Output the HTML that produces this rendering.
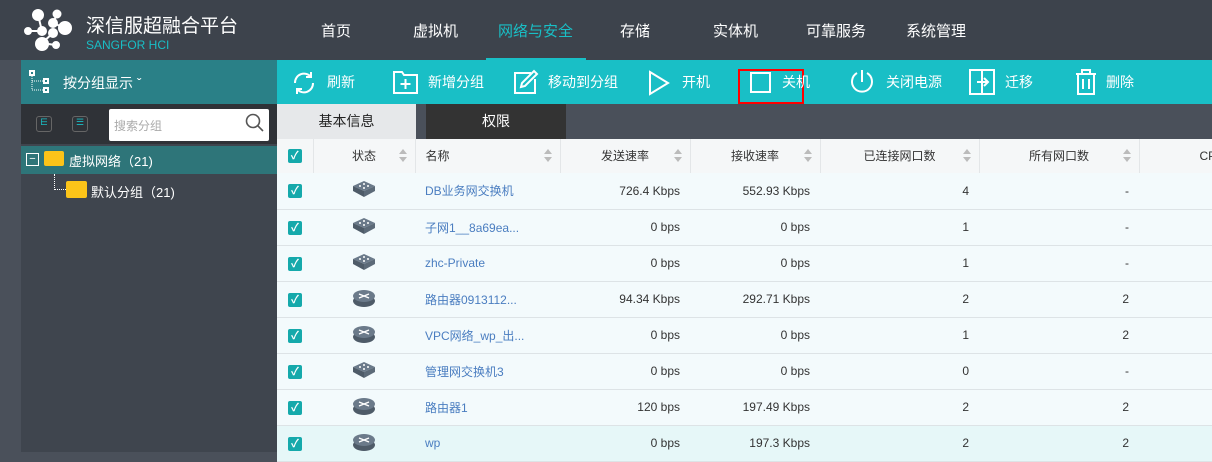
<!DOCTYPE html>
<html><head><meta charset="utf-8"><style>
*{margin:0;padding:0;box-sizing:border-box}
body{width:1212px;height:452px;overflow:hidden;background:#4a505a;font-family:"Liberation Sans","Noto Sans CJK SC",sans-serif;font-size:13px;position:relative}
.abs{position:absolute}
#hdr{left:0;top:0;width:1212px;height:60px;background:#3d434c}
.nav{position:absolute;top:20px;color:#fff;font-size:15px}
#tb{left:277px;top:60px;width:935px;height:44px;background:#19bfc6}
#tbl{left:21px;top:60px;width:256px;height:44px;background:#2a8087;color:#fff}
.ti{position:absolute;top:12px;color:#fff;font-size:14px}
#lp{left:21px;top:104px;width:256px;height:348px;background:#3f454e}
#srow{left:21px;top:104px;width:256px;height:40px;background:#2f3237}
table{position:absolute;left:277px;top:139px;border-collapse:collapse;width:960px;table-layout:fixed}
td,th{height:36px;border-bottom:1px solid #dde3e6;font-weight:normal;font-size:12px;color:#333}
th{background:#f5f7f8;height:34px;border-right:1px solid #e3e6e8;position:relative}
tr.r td{background:#f3fafc}
.cb{display:inline-block;width:14px;height:14px;background:#15a9ab;border-radius:2px;color:#fff;font-size:11px;line-height:14px;text-align:center;font-weight:bold}
.sort{position:absolute;right:8px;top:10px;width:8px;height:14px}
.sort:before{content:"";position:absolute;left:0;top:0;border:4px solid transparent;border-bottom:5px solid #bbb;border-top:0}
.sort:after{content:"";position:absolute;left:0;top:8px;border:4px solid transparent;border-top:5px solid #bbb;border-bottom:0}
.nm{color:#4a7dc0;padding-left:10px;text-align:left}
.num{text-align:right;padding-right:10px}
</style></head><body>
<div id="hdr" class="abs">
<svg class="abs" style="left:22px;top:6px" width="50" height="48" viewBox="22 6 50 48"><g fill="#fff" stroke="#fff" stroke-width="2">
<line x1="38" y1="15" x2="42" y2="31"/><line x1="28" y1="31" x2="42" y2="31"/><line x1="57" y1="14" x2="53" y2="23"/><line x1="53" y1="23" x2="65" y2="28"/><line x1="53" y1="33" x2="42" y2="43"/><line x1="42" y1="43" x2="55" y2="45"/>
<circle cx="38" cy="15" r="5"/><circle cx="57" cy="14" r="3.5"/><circle cx="65" cy="28" r="6"/><circle cx="53" cy="23" r="4"/><circle cx="28" cy="31" r="3"/><circle cx="42" cy="31" r="4"/><circle cx="53" cy="33" r="4"/><circle cx="42" cy="44" r="6"/><circle cx="56" cy="45" r="3"/></g></svg>
<div class="abs" style="left:86px;top:11px;color:#fff;font-size:19px">深信服超融合平台</div>
<div class="abs" style="left:86px;top:38px;color:#19bfc6;font-size:12px">SANGFOR HCI</div>
<div class="nav" style="left:321px">首页</div>
<div class="nav" style="left:413px">虚拟机</div>
<div class="nav" style="left:498px;color:#19bfc6">网络与安全</div>
<div class="abs" style="left:486px;top:58px;width:100px;height:2px;background:#19bfc6"></div>
<div class="nav" style="left:620px">存储</div>
<div class="nav" style="left:713px">实体机</div>
<div class="nav" style="left:806px">可靠服务</div>
<div class="nav" style="left:906px">系统管理</div>
</div>
<div id="tbl" class="abs">
<svg class="abs" style="left:8px;top:10px" width="22" height="24"><g fill="none" stroke="#fff" stroke-width="2"><rect x="1" y="1" width="4" height="4"/><rect x="15" y="9" width="4" height="4"/><rect x="15" y="18" width="4" height="4"/></g><path d="M3 6V20H14M3 11H14" stroke="#fff" stroke-dasharray="1 1" fill="none"/></svg>
<div class="abs" style="left:42px;top:13px;font-size:14px">按分组显示 ˇ</div>
</div>
<div id="tb" class="abs">
<svg class="abs" style="left:14px;top:10px" width="26" height="26" fill="none" stroke="#fff" stroke-width="2"><path d="M4 13A9 9 0 0 1 20 7M22 13A9 9 0 0 1 6 19"/><path d="M20 2V7H15M6 24V19H11"/></svg>
<div class="ti" style="left:50px">刷新</div>
<svg class="abs" style="left:116px;top:10px" width="26" height="24" fill="none" stroke="#fff" stroke-width="2"><path d="M1 2H9L11 5H24V23H1Z"/><path d="M12.5 9V19M7.5 14H17.5"/></svg>
<div class="ti" style="left:151px">新增分组</div>
<svg class="abs" style="left:236px;top:9px" width="26" height="26" fill="none" stroke="#fff" stroke-width="2"><path d="M18 4H2V24H22V10"/><path d="M8 18L9 14L21 2L24 5L12 17Z"/></svg>
<div class="ti" style="left:271px">移动到分组</div>
<svg class="abs" style="left:371px;top:10px" width="22" height="26" fill="none" stroke="#fff" stroke-width="2"><path d="M2 2L20 13L2 24Z"/></svg>
<div class="ti" style="left:405px">开机</div>
<div class="abs" style="left:461px;top:9px;width:66px;height:35px;border:2px solid #f00"></div>
<div class="abs" style="left:473px;top:12px;width:21px;height:21px;border:2px solid #fff"></div>
<div class="ti" style="left:505px">关机</div>
<svg class="abs" style="left:572px;top:9px" width="26" height="26" fill="none" stroke="#fff" stroke-width="2"><path d="M8 4A10 10 0 1 0 18 4M13 1V13"/></svg>
<div class="ti" style="left:609px">关闭电源</div>
<svg class="abs" style="left:692px;top:9px" width="26" height="26" fill="none" stroke="#fff" stroke-width="2"><rect x="1" y="1" width="24" height="24"/><path d="M13 1V25M8 13H19M15 9L19 13L15 17"/></svg>
<div class="ti" style="left:728px">迁移</div>
<svg class="abs" style="left:798px;top:8px" width="22" height="28" fill="none" stroke="#fff" stroke-width="2"><path d="M1 6H21M7 6V2H15V6M3 6V26H19V6M8 11V21M14 11V21"/></svg>
<div class="ti" style="left:829px">删除</div>
</div>
<div id="lp" class="abs"></div>
<div id="srow" class="abs">
<div class="abs" style="left:15px;top:12px;width:16px;height:16px;border:1px solid #666;border-radius:3px;color:#19bfc6;font-size:9px;text-align:center">⋿</div>
<div class="abs" style="left:51px;top:12px;width:16px;height:16px;border:1px solid #666;border-radius:3px;color:#19bfc6;font-size:9px;text-align:center">☰</div>
<div class="abs" style="left:88px;top:5px;width:160px;height:32px;background:#fff;border-radius:2px;color:#aaa;padding:8px 5px;font-size:12px">搜索分组</div>
<svg class="abs" style="left:224px;top:9px" width="20" height="20" fill="none" stroke="#555" stroke-width="1.6"><circle cx="8" cy="8" r="6.5"/><path d="M13 13L18 18"/></svg>
</div>
<div class="abs" style="left:21px;top:146px;width:256px;height:28px;background:#2e7579"></div>
<div class="abs" style="left:26px;top:153px;width:13px;height:13px;border:1px solid #fff;color:#fff;font-size:11px;line-height:10px;text-align:center">−</div>
<div class="abs" style="left:44px;top:151px;width:20px;height:15px;background:#fcc419;border-radius:2px"></div>
<div class="abs" style="left:69px;top:151px;color:#fff">虚拟网络（21)</div>
<div class="abs" style="left:54px;top:174px;width:12px;height:16px;border-left:1px dotted #fff;border-bottom:1px dotted #fff"></div>
<div class="abs" style="left:66px;top:181px;width:21px;height:17px;background:#fcc419;border-radius:2px"></div>
<div class="abs" style="left:91px;top:182px;color:#fff">默认分组（21)</div>
<div class="abs" style="left:277px;top:104px;width:139px;height:35px;background:#e6e8ea;text-align:center;line-height:35px;font-size:14px;color:#222">基本信息</div>
<div class="abs" style="left:426px;top:104px;width:140px;height:35px;background:#333;text-align:center;line-height:35px;font-size:14px;color:#fff">权限</div>
<div class="abs" style="left:277px;top:139px;width:935px;height:313px;background:#f3fafc"></div>
<table>
<colgroup><col width="36"><col width="102"><col width="145"><col width="130"><col width="130"><col width="159"><col width="160"><col width="98"></colgroup>
<tr><th><span class="cb">✓</span></th><th>状态<i class="sort"></i></th><th style="text-align:left;padding-left:10px">名称<i class="sort"></i></th><th>发送速率<i class="sort"></i></th><th>接收速率<i class="sort"></i></th><th>已连接网口数<i class="sort"></i></th><th>所有网口数<i class="sort"></i></th><th style="text-align:left;padding-left:60px;border-right:0">CPU</th></tr>
</table>
<table style="top:173px">
<colgroup><col width="36"><col width="102"><col width="145"><col width="130"><col width="130"><col width="159"><col width="160"><col width="98"></colgroup>
<tr class="r"><td align="center"><span class="cb">✓</span></td><td align="center"><svg width="24" height="20"><path d="M12 2L23 7L12 12L1 7Z" fill="#6b7a8a"/><path d="M1 7V12L12 18V12Z" fill="#4e5b68"/><path d="M23 7V12L12 18V12Z" fill="#5c6a78"/><circle cx="8" cy="7" r="1" fill="#fff"/><circle cx="16" cy="7" r="1" fill="#fff"/><circle cx="12" cy="5" r="1" fill="#fff"/><circle cx="12" cy="9" r="1" fill="#fff"/></svg></td><td class="nm">DB业务网交换机</td><td class="num">726.4 Kbps</td><td class="num">552.93 Kbps</td><td class="num">4</td><td class="num">-</td><td></td></tr>
<tr class="r"><td align="center"><span class="cb">✓</span></td><td align="center"><svg width="24" height="20"><path d="M12 2L23 7L12 12L1 7Z" fill="#6b7a8a"/><path d="M1 7V12L12 18V12Z" fill="#4e5b68"/><path d="M23 7V12L12 18V12Z" fill="#5c6a78"/><circle cx="8" cy="7" r="1" fill="#fff"/><circle cx="16" cy="7" r="1" fill="#fff"/><circle cx="12" cy="5" r="1" fill="#fff"/><circle cx="12" cy="9" r="1" fill="#fff"/></svg></td><td class="nm">子网1__8a69ea...</td><td class="num">0 bps</td><td class="num">0 bps</td><td class="num">1</td><td class="num">-</td><td></td></tr>
<tr class="r"><td align="center"><span class="cb">✓</span></td><td align="center"><svg width="24" height="20"><path d="M12 2L23 7L12 12L1 7Z" fill="#6b7a8a"/><path d="M1 7V12L12 18V12Z" fill="#4e5b68"/><path d="M23 7V12L12 18V12Z" fill="#5c6a78"/><circle cx="8" cy="7" r="1" fill="#fff"/><circle cx="16" cy="7" r="1" fill="#fff"/><circle cx="12" cy="5" r="1" fill="#fff"/><circle cx="12" cy="9" r="1" fill="#fff"/></svg></td><td class="nm">zhc-Private</td><td class="num">0 bps</td><td class="num">0 bps</td><td class="num">1</td><td class="num">-</td><td></td></tr>
<tr class="r"><td align="center"><span class="cb">✓</span></td><td align="center"><svg width="24" height="20"><ellipse cx="12" cy="13" rx="11" ry="6" fill="#4e5b68"/><ellipse cx="12" cy="8" rx="11" ry="6" fill="#6b7a8a"/><path d="M7 6L17 10M17 6L7 10" stroke="#fff" stroke-width="1.3"/></svg></td><td class="nm">路由器0913112...</td><td class="num">94.34 Kbps</td><td class="num">292.71 Kbps</td><td class="num">2</td><td class="num">2</td><td></td></tr>
<tr class="r"><td align="center"><span class="cb">✓</span></td><td align="center"><svg width="24" height="20"><ellipse cx="12" cy="13" rx="11" ry="6" fill="#4e5b68"/><ellipse cx="12" cy="8" rx="11" ry="6" fill="#6b7a8a"/><path d="M7 6L17 10M17 6L7 10" stroke="#fff" stroke-width="1.3"/></svg></td><td class="nm">VPC网络_wp_出...</td><td class="num">0 bps</td><td class="num">0 bps</td><td class="num">1</td><td class="num">2</td><td></td></tr>
<tr class="r"><td align="center"><span class="cb">✓</span></td><td align="center"><svg width="24" height="20"><path d="M12 2L23 7L12 12L1 7Z" fill="#6b7a8a"/><path d="M1 7V12L12 18V12Z" fill="#4e5b68"/><path d="M23 7V12L12 18V12Z" fill="#5c6a78"/><circle cx="8" cy="7" r="1" fill="#fff"/><circle cx="16" cy="7" r="1" fill="#fff"/><circle cx="12" cy="5" r="1" fill="#fff"/><circle cx="12" cy="9" r="1" fill="#fff"/></svg></td><td class="nm">管理网交换机3</td><td class="num">0 bps</td><td class="num">0 bps</td><td class="num">0</td><td class="num">-</td><td></td></tr>
<tr class="r"><td align="center"><span class="cb">✓</span></td><td align="center"><svg width="24" height="20"><ellipse cx="12" cy="13" rx="11" ry="6" fill="#4e5b68"/><ellipse cx="12" cy="8" rx="11" ry="6" fill="#6b7a8a"/><path d="M7 6L17 10M17 6L7 10" stroke="#fff" stroke-width="1.3"/></svg></td><td class="nm">路由器1</td><td class="num">120 bps</td><td class="num">197.49 Kbps</td><td class="num">2</td><td class="num">2</td><td></td></tr>
<tr class="r"><td align="center" style="background:#e6f7f8"><span class="cb">✓</span></td><td align="center" style="background:#e6f7f8"><svg width="24" height="20"><ellipse cx="12" cy="13" rx="11" ry="6" fill="#4e5b68"/><ellipse cx="12" cy="8" rx="11" ry="6" fill="#6b7a8a"/><path d="M7 6L17 10M17 6L7 10" stroke="#fff" stroke-width="1.3"/></svg></td><td class="nm" style="background:#e6f7f8">wp</td><td class="num" style="background:#e6f7f8">0 bps</td><td class="num" style="background:#e6f7f8">197.3 Kbps</td><td class="num" style="background:#e6f7f8">2</td><td class="num" style="background:#e6f7f8">2</td><td style="background:#e6f7f8"></td></tr>
</table>
</body></html>
